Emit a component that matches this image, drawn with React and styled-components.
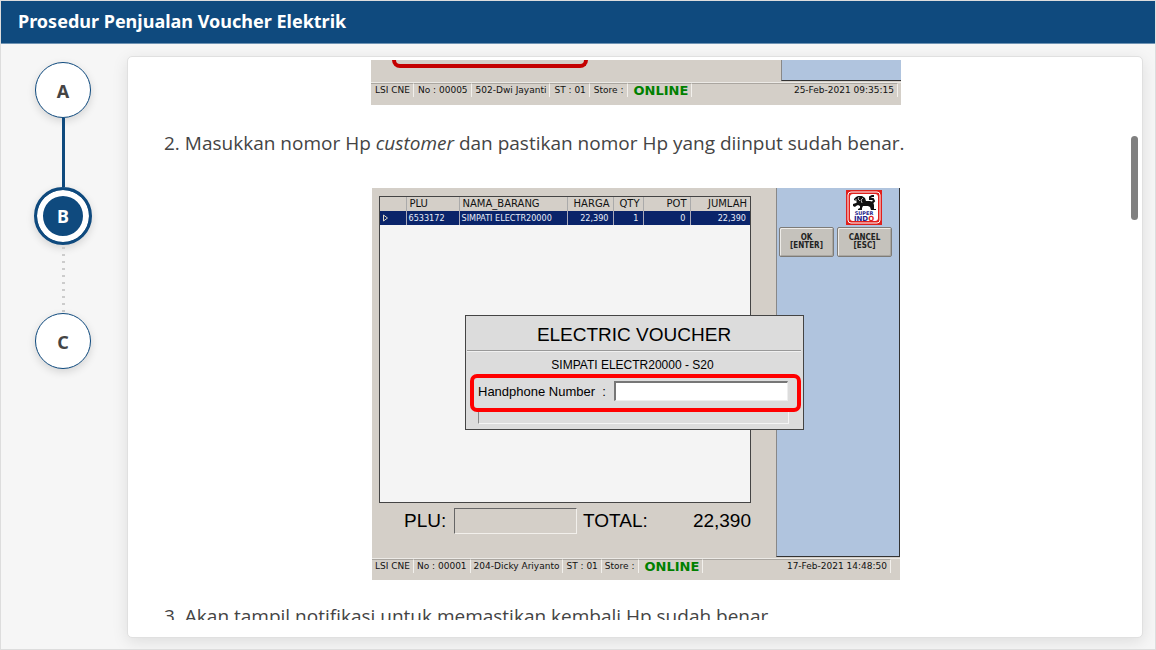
import React from "react";
import styled, { createGlobalStyle, css } from "styled-components";

const Global = createGlobalStyle`
  * { box-sizing: border-box; }
  body { margin: 0; font-family: "Open Sans", sans-serif; color: #444; }
  button, input { font: inherit; color: inherit; margin: 0; padding: 0; }
`;

const NAVY = "#0f4a7e";
const STONE = "#d4cfc8";
const SKY = "#b0c4de";

const Page = styled.div`
  display: flex;
  flex-direction: column;
  height: 100vh;
  border: 1px solid #ddd;
  background: #f6f6f6;
  overflow: hidden;
`;

const Header = styled.header`
  flex: none;
  padding: 7px 17px 9px;
  background: ${NAVY};
  border-bottom: 1px solid #6f93b3;
`;

const Title = styled.h1`
  margin: 0;
  font: 700 18px/26px "Noto Sans", "Open Sans", sans-serif;
  color: #fff;
`;

const Main = styled.div`
  flex: 1;
  min-height: 0;
  display: flex;
  padding: 12px 12px 11px 33px;
`;

const Steps = styled.ol`
  list-style: none;
  margin: 0;
  padding: 6px 0 0;
  width: 93px;
  flex: none;
`;

const Step = styled.li`
  width: 58px;
  display: flex;
  flex-direction: column;
  align-items: center;
`;

const StepButton = styled.button`
  width: 56px;
  height: 56px;
  padding-top: 2px;
  border: 1px solid ${NAVY};
  border-radius: 50%;
  background: #fff;
  font: 700 18px/24px "Noto Sans", sans-serif;
  color: #444;
  box-shadow: 0 3px 8px rgba(0, 0, 0, 0.14);
  ${(p) =>
    p.$active &&
    css`
      width: 58px;
      height: 58px;
      padding-top: 0;
      border-width: 3px;
      background: ${NAVY};
      color: #fff;
      box-shadow: inset 0 0 0 6px #fff, 0 3px 8px rgba(0, 0, 0, 0.14);
    `}
`;

const Connector = styled.span`
  width: 3px;
  height: ${(p) => (p.$done ? "69px" : "68px")};
  background: ${(p) =>
    p.$done
      ? NAVY
      : "repeating-linear-gradient(transparent 0 2px, #ccc 2px 4px, transparent 4px 7px)"};
`;

const Card = styled.main`
  position: relative;
  flex: 1;
  min-width: 0;
  display: flex;
  padding: 3px 0 17px;
  background: #fff;
  border: 1px solid #e0e0e0;
  border-radius: 5px;
  box-shadow: 0 4px 16px rgba(0, 0, 0, 0.1);
`;

const Viewport = styled.div`
  flex: 1;
  min-width: 0;
  padding-left: 2px;
  overflow: hidden;
`;

const ScrollThumb = styled.div`
  position: absolute;
  top: 79px;
  right: 4px;
  width: 7px;
  height: 84px;
  border-radius: 4px;
  background: #808080;
`;

const Item = styled.p`
  margin: 0;
  padding: 0 34px;
  display: flex;
  gap: 5px;
  font: 400 19px/28px "Open Sans", sans-serif;
  color: #444;
`;

const Screen = styled.figure`
  width: ${(p) => (p.$cut ? "530px" : "528px")};
  max-width: 100%;
  margin: ${(p) => (p.$cut ? "0 auto 24px" : "31px auto 22px")};
  background: ${STONE};
  font-family: "DejaVu Sans", sans-serif;
  color: #111;
`;

const ScreenTop = styled.div`
  display: flex;
  justify-content: space-between;
  height: ${(p) => (p.$cut ? "21px" : "369px")};
`;

const SidePanel = styled.div`
  width: ${(p) => (p.$cut ? "120px" : "124px")};
  background: ${SKY};
  border: 1px solid #333;
  border-top: 0;
  border-right-width: ${(p) => (p.$cut ? "0" : "1px")};
  border-left-color: #888;
  padding: 2px;
`;

const MarkedEdge = styled.div`
  width: 196px;
  height: 8px;
  margin-left: 21px;
  border: 4px solid #c40000;
  border-top: 0;
  border-radius: 0 0 9px 9px;
`;

const StatusBar = styled.div`
  display: flex;
  height: ${(p) => (p.$cut ? "23px" : "22px")};
  margin-top: 1px;
  padding-right: ${(p) => (p.$cut ? "3px" : "9px")};
  align-items: flex-start;
  font-size: 9px;
  line-height: 13px;
  white-space: nowrap;
  border-top: 1px solid #eceae6;
`;

const StatusCell = styled.span`
  height: 14px;
  padding: ${(p) => (p.$wide ? "0 3px 0 4px" : "0 3px")};
  border-top: 1px solid #aaa6a0;
  border-right: 1px solid #f2f0ec;
  flex: ${(p) => (p.$fill ? "1" : "none")};
  text-align: ${(p) => (p.$fill ? "right" : "left")};
`;

const Online = styled.strong`
  height: 14px;
  padding: 0 3px 0 6px;
  border-top: 1px solid #aaa6a0;
  border-right: 1px solid #f2f0ec;
  font-size: 13px;
  color: #008000;
`;

const Register = styled.div`
  position: relative;
  width: 404px;
  padding: 8px 25px 0 7px;
`;

const Grid = styled.div`
  height: 307px;
  background: #f4f4f4;
  border: 1px solid #444;
`;

const Table = styled.table`
  width: 100%;
  table-layout: fixed;
  border-collapse: collapse;
  line-height: 14px;
`;

const Th = styled.th`
  height: 14px;
  padding: 0 3px;
  background: ${STONE};
  border-right: 1px solid #aaa;
  font-size: 10px;
  font-weight: 400;
  text-align: ${(p) => (p.$num ? "right" : "left")};
  &:last-child { border-right: 0; }
`;

const Td = styled.td`
  height: 14px;
  padding: 0 4px 0 2px;
  background: #0a246a;
  border-right: 1px solid #aab;
  font-family: "DejaVu Sans Condensed", "Open Sans", sans-serif;
  font-size: 9px;
  color: #e8ecf8;
  white-space: nowrap;
  text-align: ${(p) => (p.$num ? "right" : "left")};
  &:last-child { border-right: 0; }
  svg { display: block; }
`;

const Totals = styled.div`
  display: flex;
  align-items: center;
  margin-top: 5px;
  padding-left: 25px;
  font: 400 19px/26px "Liberation Sans", Arial, sans-serif;
  color: #000;
  label { width: 50px; }
`;

const PluInput = styled.input`
  width: 123px;
  height: 26px;
  margin-right: 6px;
  background: ${STONE};
  border: 1px solid #f2f0ec;
  border-top-color: #666;
  border-left-color: #666;
  outline: 0;
`;

const Total = styled.output`
  margin-left: auto;
`;

const Dialog = styled.form`
  position: absolute;
  left: 93px;
  top: 127px;
  width: 339px;
  height: 115px;
  padding: 0 2px 0 4px;
  background: #dcdcdc;
  border: 1px solid #444;
  font-family: "Liberation Sans", Arial, sans-serif;
  color: #000;
`;

const DialogTitle = styled.h2`
  margin: 0 0 0 -3px;
  padding: 6px 0 2px;
  border-bottom: 1px solid #999;
  box-shadow: 0 1px #f0f0f0;
  text-align: center;
  font-size: 19px;
  font-weight: 400;
  line-height: 26px;
`;

const DialogText = styled.p`
  margin: 0;
  padding: 6px 6px 0 0;
  text-align: center;
  font-size: 12px;
  line-height: 17px;
`;

const Field = styled.div`
  display: flex;
  align-items: center;
  height: 38px;
  padding: 0 9px 4px 4px;
  border: 4px solid #f00;
  border-radius: 7px;
  font-size: 13px;
  label { flex: 1; white-space: pre; }
`;

const NumberInput = styled.input`
  width: 174px;
  height: 20px;
  background: #fff;
  border: 1px solid #eee;
  border-top: 2px solid #777;
  border-left: 2px solid #777;
  outline: 0;
`;

const MessageWell = styled.div`
  height: 12px;
  margin: 0 12px 0 8px;
  border: 1px solid #f4f4f4;
  border-left-color: #888;
  border-top: 0;
`;

const LogoBox = styled.svg`
  display: block;
  margin: 0 0 2px 67px;
`;

const Actions = styled.div`
  display: flex;
  gap: 3px;
`;

const ActionButton = styled.button`
  width: 55px;
  height: 30px;
  background: #c5c2bc;
  border: 1px solid #7d7b77;
  border-radius: 2px;
  box-shadow: inset 1px 1px #eeece8, inset -1px -1px #aaa7a1;
  font: 700 8px/8px "DejaVu Sans Condensed", sans-serif;
  color: #222;
`;

function Logo() {
  return (
    <LogoBox width="36" height="35" viewBox="0 0 36 35" role="img" aria-label="Super Indo">
      <rect width="36" height="35" fill="#e0201c" />
      <rect x="2" y="2" width="32" height="31" rx="3" fill="none" stroke="#fff" />
      <rect x="4" y="4" width="28" height="27" rx="3" fill="#fff" />
      <path
        d="M8 9l2-2 2-1h4l3 2 1 3h4l3 1 1 3v4h2v1h-5l-1-3-2-1h-5l-1 2v2h-4v-1l2-1v-2l-2-1-2 1-1 1-2-1v-2l3-1 1-1-1-1-2-1z"
        fill="#111"
      />
      <path d="M26 13l2-2-1-2h-3V7l2-1h2" fill="none" stroke="#111" strokeWidth="2" />
      <path d="M13 7l-1 2 2 2M17 8l-2 2 1 3M9 10h2" fill="none" stroke="#fff" strokeWidth="0.7" />
      <text x="18" y="25" textAnchor="middle" fontFamily="DejaVu Sans" fontWeight="700" fontSize="5" fill="#26238a">
        SUPER
      </text>
      <text x="18" y="31" textAnchor="middle" fontFamily="DejaVu Sans" fontWeight="700" fontSize="7" fill="#26238a">
        IND<tspan fill="#e0201c">O</tspan>
      </text>
    </LogoBox>
  );
}

function Status({ cut, no, cashier, time }) {
  return (
    <StatusBar $cut={cut}>
      <StatusCell $wide={cut}>LSI CNE</StatusCell>
      <StatusCell $wide={cut}>No : {no}</StatusCell>
      <StatusCell $wide={cut}>{cashier}</StatusCell>
      <StatusCell $wide={cut}>ST : 01</StatusCell>
      <StatusCell $wide={cut}>Store :</StatusCell>
      <Online>ONLINE</Online>
      <StatusCell $fill>{time}</StatusCell>
    </StatusBar>
  );
}

const columns = [
  { width: 26 },
  { label: "PLU", value: "6533172", width: 53 },
  { label: "NAMA_BARANG", value: "SIMPATI ELECTR20000", width: 108 },
  { label: "HARGA", value: "22,390", width: 46, num: true },
  { label: "QTY", value: "1", width: 30, num: true },
  { label: "POT", value: "0", width: 47, num: true },
  { label: "JUMLAH", value: "22,390", width: 60, num: true },
];

export default function App() {
  return (
    <Page>
      <Global />
      <Header>
        <Title>Prosedur Penjualan Voucher Elektrik</Title>
      </Header>
      <Main>
        <Steps>
          <Step>
            <StepButton>A</StepButton>
            <Connector $done />
          </Step>
          <Step>
            <StepButton $active aria-current="step">B</StepButton>
            <Connector />
          </Step>
          <Step>
            <StepButton>C</StepButton>
          </Step>
        </Steps>
        <Card>
          <Viewport>
            <Screen $cut>
              <ScreenTop $cut>
                <MarkedEdge />
                <SidePanel $cut />
              </ScreenTop>
              <Status cut no="00005" cashier="502-Dwi Jayanti" time="25-Feb-2021 09:35:15" />
            </Screen>
            <Item>
              <span>2.</span>
              <span>
                Masukkan nomor Hp <em>customer</em> dan pastikan nomor Hp yang diinput sudah benar.
              </span>
            </Item>
            <Screen>
              <ScreenTop>
                <Register>
                  <Grid>
                    <Table>
                      <colgroup>
                        {columns.map((c, i) => (
                          <col key={i} width={c.width} />
                        ))}
                      </colgroup>
                      <thead>
                        <tr>
                          {columns.map((c, i) => (
                            <Th key={i} $num={c.num}>{c.label}</Th>
                          ))}
                        </tr>
                      </thead>
                      <tbody>
                        <tr>
                          {columns.map((c, i) => (
                            <Td key={i} $num={c.num}>
                              {c.value || (
                                <svg width="7" height="8" viewBox="0 0 7 8">
                                  <path d="M1.500 1v6L5.500 4z" fill="none" stroke="#ddd8c8" />
                                </svg>
                              )}
                            </Td>
                          ))}
                        </tr>
                      </tbody>
                    </Table>
                  </Grid>
                  <Totals>
                    <label htmlFor="plu">PLU:</label>
                    <PluInput id="plu" />
                    <span>TOTAL:</span>
                    <Total>22,390</Total>
                  </Totals>
                  <Dialog>
                    <DialogTitle>ELECTRIC VOUCHER</DialogTitle>
                    <DialogText>SIMPATI ELECTR20000 - S20</DialogText>
                    <Field>
                      <label htmlFor="phone">{"Handphone Number  :"}</label>
                      <NumberInput id="phone" type="tel" />
                    </Field>
                    <MessageWell />
                  </Dialog>
                </Register>
                <SidePanel>
                  <Logo />
                  <Actions>
                    <ActionButton>OK<br />[ENTER]</ActionButton>
                    <ActionButton>CANCEL<br />[ESC]</ActionButton>
                  </Actions>
                </SidePanel>
              </ScreenTop>
              <Status no="00001" cashier="204-Dicky Ariyanto" time="17-Feb-2021 14:48:50" />
            </Screen>
            <Item>
              <span>3.</span>
              <span>Akan tampil notifikasi untuk memastikan kembali Hp sudah benar.</span>
            </Item>
          </Viewport>
          <ScrollThumb />
        </Card>
      </Main>
    </Page>
  );
}
